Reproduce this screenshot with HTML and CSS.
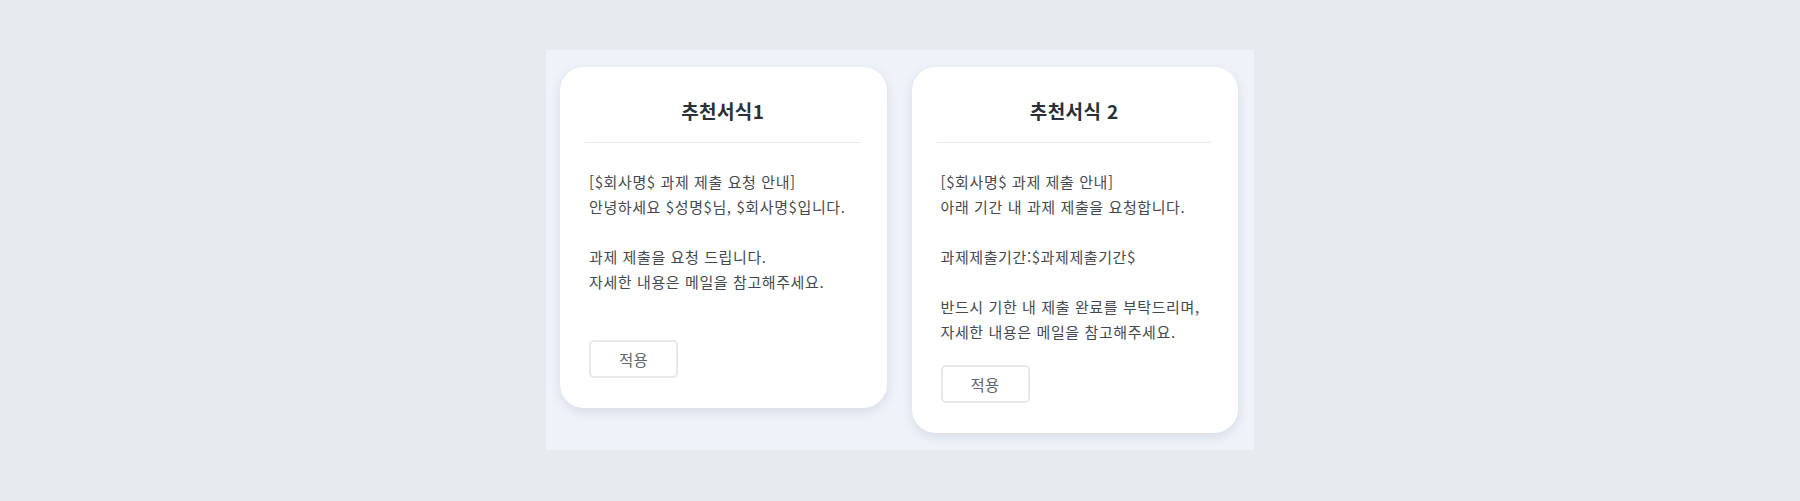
FILE: index.html
```html
<!DOCTYPE html>
<html lang="ko">
<head>
<meta charset="utf-8">
<title>추천서식</title>
<link rel="stylesheet" href="styles.css">
</head>
<body>
<div class="panel">
  <div class="card">
    <div class="card-head"><h2 class="card-title">추천서식1</h2></div>
    <div class="card-body">
      <p class="line">[$회사명$ 과제 제출 요청 안내]</p>
      <p class="line">안녕하세요 $성명$님, $회사명$입니다.</p>
      <p class="line blank">&nbsp;</p>
      <p class="line">과제 제출을 요청 드립니다.</p>
      <p class="line">자세한 내용은 메일을 참고해주세요.</p>
      <p class="line blank">&nbsp;</p>
    </div>
    <button class="apply-btn" type="button">적용</button>
  </div>
  <div class="card">
    <div class="card-head"><h2 class="card-title">추천서식 2</h2></div>
    <div class="card-body">
      <p class="line">[$회사명$ 과제 제출 안내]</p>
      <p class="line">아래 기간 내 과제 제출을 요청합니다.</p>
      <p class="line blank">&nbsp;</p>
      <p class="line">과제제출기간:$과제제출기간$</p>
      <p class="line blank">&nbsp;</p>
      <p class="line">반드시 기한 내 제출 완료를 부탁드리며,</p>
      <p class="line">자세한 내용은 메일을 참고해주세요.</p>
    </div>
    <button class="apply-btn" type="button">적용</button>
  </div>
</div>
</body>
</html>
```

FILE: styles.css
```css
html, body {
  margin: 0;
  padding: 0;
}
body {
  background: #e8ebee;
  font-family: "Noto Sans CJK KR", "Noto Sans", sans-serif;
  padding-top: 50px;
}
.panel {
  width: 708px;
  box-sizing: border-box;
  margin: 0 auto;
  background: #eef2f9;
  padding: 17px 16px 17px 14px;
  display: flex;
  align-items: flex-start;
  gap: 25px;
}
.card {
  flex: 1;
  background: #ffffff;
  border-radius: 24px;
  box-shadow: 0 4px 12px rgba(30, 40, 60, 0.10);
  padding: 0 26px 30px 25px;
  display: flex;
  flex-direction: column;
  align-items: flex-start;
}
.card-head {
  align-self: stretch;
  padding: 30px 0 17px;
  border-bottom: 1px solid #e6e9ee;
  text-align: center;
}
.card-title {
  margin: 0;
  font-size: 19px;
  line-height: 28px;
  font-weight: 700;
  letter-spacing: 0.4px;
  color: #2b2f36;
}
.card-body {
  padding: 26px 0 0 4px;
  margin-bottom: 21px;
}
.line {
  margin: 0;
  font-size: 15px;
  line-height: 25px;
  letter-spacing: 0.6px;
  color: #45494f;
  white-space: nowrap;
}
.apply-btn {
  margin-left: 4px;
  width: 89px;
  height: 38px;
  box-sizing: border-box;
  background: #ffffff;
  border: 2px solid #e6e8ec;
  border-radius: 5px;
  font-family: "Noto Sans CJK KR", "Noto Sans", sans-serif;
  font-size: 15.5px;
  letter-spacing: 0.3px;
  color: #62666c;
  cursor: pointer;
}
```
